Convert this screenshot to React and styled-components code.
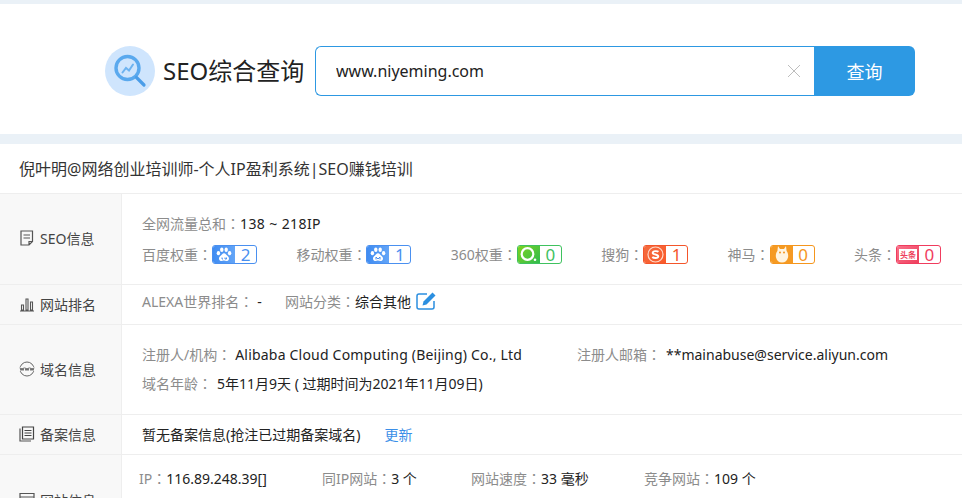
import React from 'react';
import styled, { createGlobalStyle } from 'styled-components';

const FONT = '"Noto Sans", "Noto Sans CJK SC", sans-serif';

const GlobalStyle = createGlobalStyle`
    html, body {
        margin: 0;
        padding: 0;
        height: 498px;
        overflow: hidden;
        background: #fff;
        font-family: ${FONT};
    }
    * { box-sizing: border-box; }
`;

const Page = styled.div`
    width: 962px;
    height: 498px;
    overflow: hidden;
    padding-top: 4px;
    background: #eaf1f7;
`;

const SearchBar = styled.div`
    height: 130px;
    background: #fff;
    display: flex;
    align-items: center;
    padding: 4px 0 0 105px;
`;

const Logo = styled.div`
    width: 50px;
    height: 50px;
    border-radius: 50%;
    background: #cfe5fd;
    display: flex;
    align-items: center;
    justify-content: center;
`;

const Heading = styled.h1`
    margin: 0 11px 0 8px;
    width: 141px;
    font-size: 24px;
    line-height: 50px;
    font-weight: 400;
    color: #222;
    white-space: nowrap;
`;

const SearchBox = styled.div`
    width: 499px;
    height: 50px;
    display: flex;
    align-items: center;
    border: 1px solid #2d98e2;
    border-right: 0;
    border-radius: 6px 0 0 6px;
    padding: 0 13px 0 20px;
    background: #fff;
`;

const SearchInput = styled.input`
    flex: 1;
    border: 0;
    outline: 0;
    padding: 0;
    font-family: ${FONT};
    font-size: 16px;
    color: #222;
    background: transparent;
`;

const SearchButton = styled.button`
    width: 101px;
    height: 50px;
    border: 0;
    padding: 0;
    border-radius: 0 6px 6px 0;
    background: #2d99e3;
    color: #fff;
    font-family: ${FONT};
    font-size: 18px;
`;

const Sheet = styled.div`
    margin-top: 10px;
    background: #fff;
`;

const SiteTitle = styled.div`
    height: 50px;
    padding: 0 0 2px 19px;
    display: flex;
    align-items: center;
    font-size: 16px;
    color: #333;
    border-bottom: 1px solid #eee;
    white-space: nowrap;
`;

const Row = styled.div`
    display: flex;
    height: ${props => props.$height}px;
    border-bottom: 1px solid #eee;
`;

const RowHead = styled.div`
    width: 122px;
    flex: none;
    display: flex;
    align-items: center;
    gap: 5px;
    padding: 0 0 2px 19px;
    background: #f8f8f8;
    border-right: 1px solid #eee;
    font-size: 14px;
    color: #444;
    white-space: nowrap;
`;

const RowBody = styled.div`
    flex: 1;
    min-width: 0;
    display: flex;
    flex-direction: column;
    justify-content: ${props => props.$top ? 'flex-start' : 'center'};
    gap: ${props => props.$gap || 0}px;
    padding: ${props => props.$top || 0}px 21px ${props => props.$bottom ?? 2}px 20px;
`;

const Line = styled.div`
    display: flex;
    align-items: center;
    height: 20px;
    margin-left: ${props => props.$shift || 0}px;
    font-size: 14px;
    white-space: nowrap;
    justify-content: ${props => props.$spread ? 'space-between' : 'flex-start'};
`;

const Field = styled.span`
    display: inline-flex;
    align-items: center;
    width: ${props => props.$width ? `${props.$width}px` : 'auto'};
    color: #8c8c8c;
`;

const Colon = styled.span`
    font-family: "Noto Sans CJK TC", sans-serif;
`;

const Value = styled.span`
    color: #222;
    margin-left: ${props => props.$indent || 0}px;
    letter-spacing: ${props => props.$spacing || 0}px;
`;

const LinkText = styled.a`
    color: #3b8fe8;
    margin-left: 24px;
`;

const BadgeBox = styled.span`
    display: inline-flex;
    width: 45px;
    height: 19px;
    border: 1px solid ${props => props.$color};
    border-radius: 3px;
`;

const BadgeIcon = styled.span`
    width: 22px;
    flex: none;
    display: flex;
    align-items: center;
    justify-content: center;
    border-radius: 2px 0 0 2px;
    background: ${props => props.$bg};
`;

const BadgeNumber = styled.span`
    flex: 1;
    text-align: center;
    font-size: 17px;
    line-height: 17px;
    color: ${props => props.$color};
`;

const ToutiaoMark = styled.span`
    width: 18px;
    height: 11px;
    background: #fff;
    color: #ee3f5d;
    font-size: 8px;
    font-weight: 700;
    line-height: 11px;
    text-align: center;
    white-space: nowrap;
`;

const EditButton = styled.span`
    display: inline-flex;
    margin-left: 5px;
    margin-top: -1px;
`;

const Paw = ({ letter }) => (
    <svg width="16" height="15" viewBox="0 0 16 15">
        <g fill="#fff">
            <ellipse cx="2.4" cy="6.2" rx="1.7" ry="2.1" />
            <ellipse cx="5.8" cy="2.8" rx="1.7" ry="2.2" />
            <ellipse cx="10.2" cy="2.8" rx="1.7" ry="2.2" />
            <ellipse cx="13.6" cy="6.2" rx="1.7" ry="2.1" />
            <path d="M8 6.2c-1.6 0-2.2 1.6-3.4 2.6C3.4 9.8 3 10.600 3 11.700 3 13.300 4.400 14 5.600 14c1 0 1.500-.4 2.400-.4s1.400.4 2.400.4c1.200 0 2.600-.7 2.600-2.300 0-1.100-.4-1.900-1.600-2.900C10.200 7.800 9.600 6.200 8 6.200z" />
        </g>
        <path d={letter} fill="none" stroke="#4a90f0" strokeWidth="1" />
    </svg>
);

const RING = (
    <svg width="19" height="16" viewBox="0 0 19 16">
        <circle cx="8.500" cy="8" r="5.800" fill="none" stroke="#fff" strokeWidth="2.200" />
        <circle cx="16" cy="13.800" r="1.300" fill="#fff" />
    </svg>
);

const SOGOU = (
    <svg width="17" height="17" viewBox="0 0 17 17">
        <circle cx="8.500" cy="8.500" r="7.500" fill="none" stroke="#ffd9c8" strokeWidth="1.200" />
        <path d="M11.500 5.800C10.500 4.900 6 4.500 5.700 6.800 5.500 9 11.400 8 11.300 10.300 11.100 12.600 6.500 12.200 5.300 11" fill="none" stroke="#fff" strokeWidth="1.900" />
    </svg>
);

const OWL = (
    <svg width="14" height="17" viewBox="0 0 14 17">
        <path d="M3 0l2 3h4l2-3 .6 5C13 7 13.500 9 13 11.500 12.400 14.500 10 16.500 7 16.500S1.600 14.500 1 11.500C.5 9 1 7 2.400 5z" fill="#fff4e0" />
        <circle cx="5" cy="6.500" r="1" fill="#f5961d" />
        <circle cx="9" cy="6.500" r="1" fill="#f5961d" />
    </svg>
);

const BADGES = [
    { label: '百度权重', value: 2, color: '#4a90f0', bg: 'linear-gradient(90deg,#3f8cf2,#64a5f7)', icon: <Paw letter="M6 10.500v1.500h1M9 10.500v1.500h1.500v-1.500" /> },
    { label: '移动权重', value: 1, color: '#4a90f0', bg: 'linear-gradient(90deg,#3f8cf2,#64a5f7)', icon: <Paw letter="M6 12.500v-2.500l2 2 2-2v2.500" /> },
    { label: '360权重', value: 0, color: '#3fc25f', bg: 'linear-gradient(135deg,#7ed321,#2fbb4f)', icon: RING },
    { label: '搜狗', value: 1, color: '#f4552a', bg: 'linear-gradient(135deg,#f46b3f,#fa5a2a)', icon: SOGOU },
    { label: '神马', value: 0, color: '#f5961d', bg: '#f59a23', icon: OWL },
    { label: '头条', value: 0, color: '#f03c5e', bg: 'linear-gradient(135deg,#f9728a,#ee3f5d)', icon: <ToutiaoMark>头条</ToutiaoMark> },
];

const Badge = ({ label, value, color, bg, icon }) => (
    <Field>
        {label}<Colon>：</Colon>
        <BadgeBox $color={color}>
            <BadgeIcon $bg={bg}>{icon}</BadgeIcon>
            <BadgeNumber $color={color}>{value}</BadgeNumber>
        </BadgeBox>
    </Field>
);

const App = () => (
    <Page>
        <GlobalStyle />
        <SearchBar>
            <Logo>
                <svg width="36" height="38" viewBox="0 0 36 38">
                    <circle cx="15.500" cy="16" r="11.500" fill="none" stroke="#5aa9ee" strokeWidth="3.400" />
                    <path d="M24.500 25.500l7.500 7.500" stroke="#4a9de8" strokeWidth="3.200" strokeLinecap="round" />
                    <path d="M10.500 20.500l3.500-4.500 3 2.500 4-6" fill="none" stroke="#6db3f0" strokeWidth="2" strokeLinecap="round" />
                </svg>
            </Logo>
            <Heading>SEO综合查询</Heading>
            <SearchBox>
                <SearchInput defaultValue="www.niyeming.com" />
                <svg width="14" height="14" viewBox="0 0 14 14">
                    <path d="M1 1l12 12M13 1L1 13" stroke="#bdbdbd" strokeWidth="1" />
                </svg>
            </SearchBox>
            <SearchButton>查询</SearchButton>
        </SearchBar>
        <Sheet>
            <SiteTitle>倪叶明@网络创业培训师-个人IP盈利系统|SEO赚钱培训</SiteTitle>
            <Row $height={91}>
                <RowHead>
                    <svg width="16" height="16" viewBox="0 0 16 16">
                        <path d="M2 1h11.500v10.500L10 15H2z M13.500 11.500H10V15 M4.500 5h6.500M4.500 8h6.500" fill="none" stroke="#555" strokeWidth="1.200" />
                    </svg>
                    SEO信息
                </RowHead>
                <RowBody $gap={11} $bottom={1}>
                    <Line>
                        <Field>全网流量总和<Colon>：</Colon></Field>
                        <Value $spacing={0.4}>138 ~ 218IP</Value>
                    </Line>
                    <Line $spread>
                        {BADGES.map(badge => <Badge key={badge.label} {...badge} />)}
                    </Line>
                </RowBody>
            </Row>
            <Row $height={40}>
                <RowHead>
                    <svg width="16" height="16" viewBox="0 0 16 16">
                        <path d="M1 15h14M2.500 14V9h2v5zM7 14V3h2v11zM11.500 14V6h2v8z" fill="none" stroke="#555" strokeWidth="1.100" />
                    </svg>
                    网站排名
                </RowHead>
                <RowBody $bottom={7}>
                    <Line>
                        <Field $width={143}>ALEXA世界排名<Colon>：</Colon><Value $indent={4}>-</Value></Field>
                        <Field>网站分类<Colon>：</Colon></Field>
                        <Value>综合其他</Value>
                        <EditButton>
                            <svg width="21" height="20" viewBox="0 0 21 20">
                                <path d="M11 3H3a2 2 0 0 0-2 2v11a2 2 0 0 0 2 2h13a2 2 0 0 0 2-2v-6" fill="none" stroke="#2b8fe0" strokeWidth="1.500" />
                                <path d="M7.500 10.500L16.500 1.500l3 3-9 9-4 1z" fill="#2b8fe0" />
                            </svg>
                        </EditButton>
                    </Line>
                </RowBody>
            </Row>
            <Row $height={90}>
                <RowHead>
                    <svg width="16" height="16" viewBox="0 0 16 16">
                        <circle cx="8" cy="8" r="7" fill="none" stroke="#666" strokeWidth="1" />
                        <rect x="0" y="6" width="16" height="4" fill="#f8f8f8" />
                        <path d="M1 6.500l1 3 1-2.500 1 2.500 1-3M6 6.500l1 3 1-2.500 1 2.500 1-3M11 6.500l1 3 1-2.500 1 2.500 1-3" fill="none" stroke="#444" strokeWidth=".8" />
                    </svg>
                    域名信息
                </RowHead>
                <RowBody $gap={9}>
                    <Line>
                        <Field $width={435}>
                            注册人/机构<Colon>：</Colon><Value $indent={4} $spacing={0.2}>Alibaba Cloud Computing (Beijing) Co., Ltd</Value>
                        </Field>
                        <Field>注册人邮箱<Colon>：</Colon><Value $indent={5}>**mainabuse@service.aliyun.com</Value></Field>
                    </Line>
                    <Line>
                        <Field>域名年龄<Colon>：</Colon><Value $indent={5}>5年11月9天 ( 过期时间为2021年11月09日)</Value></Field>
                    </Line>
                </RowBody>
            </Row>
            <Row $height={40}>
                <RowHead>
                    <svg width="16" height="16" viewBox="0 0 16 16">
                        <path d="M1 2.500v12.500h11" fill="none" stroke="#555" strokeWidth="1.200" />
                        <path d="M3.500 1h11v12h-11z" fill="none" stroke="#444" strokeWidth="1.200" />
                        <path d="M5.500 4.500h7M5.500 7h7M5.500 9.500h7" stroke="#444" strokeWidth="1" />
                    </svg>
                    备案信息
                </RowHead>
                <RowBody>
                    <Line>
                        <Value>暂无备案信息(抢注已过期备案域名)</Value>
                        <LinkText>更新</LinkText>
                    </Line>
                </RowBody>
            </Row>
            <Row $height={92}>
                <RowHead>
                    <svg width="16" height="16" viewBox="0 0 16 16">
                        <path d="M1 1.500h14v13H1zM1 5h14" fill="none" stroke="#555" strokeWidth="1.200" />
                    </svg>
                    网站信息
                </RowHead>
                <RowBody $top={13}>
                    <Line $shift={-3}>
                        <Field $width={183}>IP<Colon>：</Colon><Value>116.89.248.39[]</Value></Field>
                        <Field $width={149}>同IP网站<Colon>：</Colon><Value>3 个</Value></Field>
                        <Field $width={173}>网站速度<Colon>：</Colon><Value>33 毫秒</Value></Field>
                        <Field>竞争网站<Colon>：</Colon><Value>109 个</Value></Field>
                    </Line>
                </RowBody>
            </Row>
        </Sheet>
    </Page>
);

export default App;
